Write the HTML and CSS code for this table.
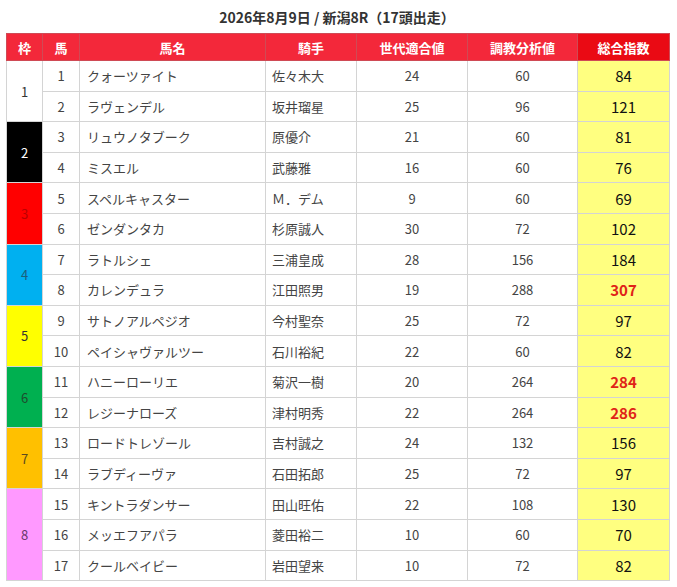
FILE: index.html
```html
<!DOCTYPE html>
<html lang="ja">
<head>
<meta charset="utf-8">
<title>新潟8R</title>
<link rel="stylesheet" href="styles.css">
</head>
<body>
<div class="wrap">
  <h1 class="title">2026年8月9日 / 新潟8R（17頭出走）</h1>
  <table class="race">
    <colgroup>
      <col class="c-waku"><col class="c-uma"><col class="c-name"><col class="c-jockey"><col class="c-gen"><col class="c-train"><col class="c-total">
    </colgroup>
    <thead>
      <tr>
        <th>枠</th><th>馬</th><th>馬名</th><th>騎手</th><th>世代適合値</th><th>調教分析値</th><th class="h-total">総合指数</th>
      </tr>
    </thead>
    <tbody>
      <tr><td class="waku w1" rowspan="2">1</td><td class="num">1</td><td class="name">クォーツァイト</td><td class="jk">佐々木大</td><td class="num">24</td><td class="num">60</td><td class="total">84</td></tr>
      <tr><td class="num">2</td><td class="name">ラヴェンデル</td><td class="jk">坂井瑠星</td><td class="num">25</td><td class="num">96</td><td class="total">121</td></tr>
      <tr><td class="waku w2" rowspan="2">2</td><td class="num">3</td><td class="name">リュウノタブーク</td><td class="jk">原優介</td><td class="num">21</td><td class="num">60</td><td class="total">81</td></tr>
      <tr><td class="num">4</td><td class="name">ミスエル</td><td class="jk">武藤雅</td><td class="num">16</td><td class="num">60</td><td class="total">76</td></tr>
      <tr><td class="waku w3" rowspan="2">3</td><td class="num">5</td><td class="name">スペルキャスター</td><td class="jk">Ｍ．デム</td><td class="num">9</td><td class="num">60</td><td class="total">69</td></tr>
      <tr><td class="num">6</td><td class="name">ゼンダンタカ</td><td class="jk">杉原誠人</td><td class="num">30</td><td class="num">72</td><td class="total">102</td></tr>
      <tr><td class="waku w4" rowspan="2">4</td><td class="num">7</td><td class="name">ラトルシェ</td><td class="jk">三浦皇成</td><td class="num">28</td><td class="num">156</td><td class="total">184</td></tr>
      <tr><td class="num">8</td><td class="name">カレンデュラ</td><td class="jk">江田照男</td><td class="num">19</td><td class="num">288</td><td class="total hot">307</td></tr>
      <tr><td class="waku w5" rowspan="2">5</td><td class="num">9</td><td class="name">サトノアルペジオ</td><td class="jk">今村聖奈</td><td class="num">25</td><td class="num">72</td><td class="total">97</td></tr>
      <tr><td class="num">10</td><td class="name">ペイシャヴァルツー</td><td class="jk">石川裕紀</td><td class="num">22</td><td class="num">60</td><td class="total">82</td></tr>
      <tr><td class="waku w6" rowspan="2">6</td><td class="num">11</td><td class="name">ハニーローリエ</td><td class="jk">菊沢一樹</td><td class="num">20</td><td class="num">264</td><td class="total hot">284</td></tr>
      <tr><td class="num">12</td><td class="name">レジーナローズ</td><td class="jk">津村明秀</td><td class="num">22</td><td class="num">264</td><td class="total hot">286</td></tr>
      <tr><td class="waku w7" rowspan="2">7</td><td class="num">13</td><td class="name">ロードトレゾール</td><td class="jk">吉村誠之</td><td class="num">24</td><td class="num">132</td><td class="total">156</td></tr>
      <tr><td class="num">14</td><td class="name">ラブディーヴァ</td><td class="jk">石田拓郎</td><td class="num">25</td><td class="num">72</td><td class="total">97</td></tr>
      <tr><td class="waku w8" rowspan="3">8</td><td class="num">15</td><td class="name">キントラダンサー</td><td class="jk">田山旺佑</td><td class="num">22</td><td class="num">108</td><td class="total">130</td></tr>
      <tr><td class="num">16</td><td class="name">メッエフアパラ</td><td class="jk">菱田裕二</td><td class="num">10</td><td class="num">60</td><td class="total">70</td></tr>
      <tr><td class="num">17</td><td class="name">クールベイビー</td><td class="jk">岩田望来</td><td class="num">10</td><td class="num">72</td><td class="total">82</td></tr>
    </tbody>
  </table>
</div>
</body>
</html>
```

FILE: styles.css
```css
html, body {
  margin: 0;
  padding: 0;
  background: #ffffff;
}

body {
  font-family: "Noto Sans CJK JP", "Noto Sans", sans-serif;
  color: #444;
}

.wrap {
  padding: 0 9px 0 6px;
}

.title {
  margin: 0;
  height: 33px;
  line-height: 34px;
  font-size: 14px;
  font-weight: bold;
  color: #333;
  text-align: center;
}

.race {
  width: 663px;
  border-collapse: collapse;
  table-layout: fixed;
  font-size: 13px;
}

.c-waku { width: 36px; }
.c-uma { width: 37px; }
.c-name { width: 186px; }
.c-jockey { width: 91px; }
.c-gen { width: 111px; }
.c-train { width: 110px; }
.c-total { width: 92px; }

.race th {
  height: 26px;
  padding: 0;
  background: #f3283a;
  color: #fff;
  font-weight: bold;
  font-size: 13px;
  border: 1px solid #cf4a55;
  text-align: center;
}

.race th.h-total {
  background: #ea0a14;
}

.race td {
  height: 29.6px;
  padding: 0;
  border: 1px solid #d4d4d4;
  text-align: center;
  vertical-align: middle;
}

.race td.name,
.race td.jk {
  text-align: left;
  padding-left: 7px;
}

.race td.jk {
  padding-left: 6px;
}

.race td.total {
  background: #ffff80;
  color: #111;
  font-size: 15px;
}

.race td.total.hot {
  color: #e02418;
  font-weight: bold;
}

.waku { color: #333; }
.w1 { background: #ffffff; }
.w2 { background: #000000; color: #fff; }
.w3 { background: #ff0000; color: #b00; }
.w4 { background: #00b0f0; color: #1d5f7a; }
.w5 { background: #ffff00; }
.w6 { background: #00b050; color: #1e4d2e; }
.w7 { background: #ffc000; color: #5a4a20; }
.w8 { background: #ff99ff; color: #6a3a6a; }
```
